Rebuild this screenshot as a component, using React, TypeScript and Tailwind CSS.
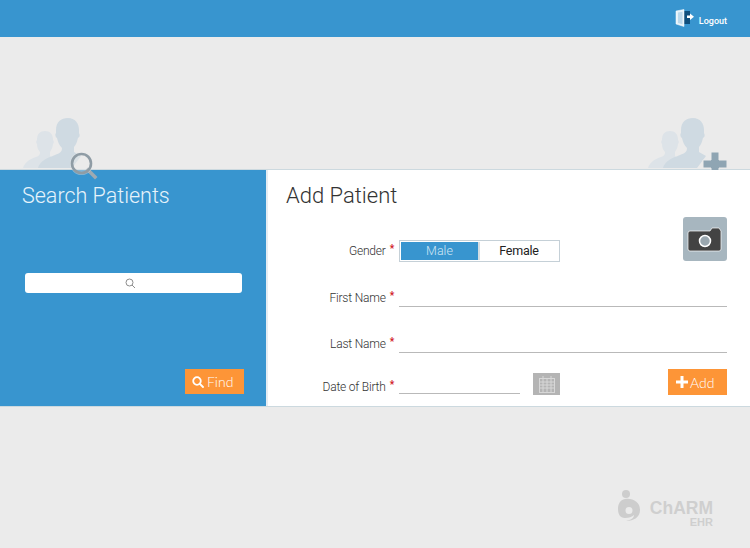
import React from "react";

function People({ className }: { className?: string }) {
  return (
    <svg className={className} width="76" height="52" viewBox="0 0 76 52">
      <path fill="#dde3e8" d="M0 51c2-6 7-9 13-11 3-1 4-2 4-5-2-2-3-5-3-8-1-1-1-3 0-4 0-6 3-9 8-9s8 3 8 9c1 1 1 3 0 4 0 3-2 6-3 8l0 4 3 3-6 9z" />
      <path fill="#cfdae2" d="M15 51c2-7 9-10 17-13 5-2 7-3 7-7-3-3-4-6-5-10-2-1-2-4-1-5 0-1 0-2 0-3 0-8 5-12 12-12s11 5 11 12c0 1 0 2 0 3 1 2 1 4-1 5-1 4-2 7-4 9v5l7 4-9 12z" />
    </svg>
  );
}

function Label({ children, className }: { children: React.ReactNode; className?: string }) {
  return (
    <div className={`w-[131px] shrink-0 pr-[5px] text-right font-[Roboto,sans-serif] text-[12px] leading-[16px] font-light tracking-[-0.2px] text-[#333] ${className ?? ""}`}>
      {children}
      <span className="relative -top-[3px] ml-[4px] text-[10px] font-bold text-[#d0141e]">*</span>
    </div>
  );
}

export default function App() {
  return (
    <div className="flex h-[548px] w-[750px] flex-col overflow-hidden bg-[#ebebeb] font-[Roboto,sans-serif]">
      <header className="flex h-[37px] shrink-0 items-center justify-end gap-[5px] bg-[#3895cf] pr-[23px]">
        <svg width="19" height="18" viewBox="0 0 19 18" className="-mt-[2px]">
          <rect x="8" y="2" width="7" height="13" fill="#0f4f7d" />
          <path fill="#e8f3fa" stroke="#fff" strokeWidth="0.5" d="M1 2 9 0.500v17L1 15z" />
          <path fill="#bcd9ec" d="M3 3.500 7.500 2.700v12.600L3 14z" />
          <path fill="#fff" d="M12 6.500h3V4.500l4 3.200-4 3.200V9h-3z" />
        </svg>
        <span className="pt-[7px] font-[Roboto,sans-serif] text-[9px] font-medium text-white">Logout</span>
      </header>

      <div className="relative flex h-[132px] shrink-0 items-end justify-between pr-[26px] pl-[23px]">
        <People />
        <People />
        <svg className="absolute top-[114px] left-[69px]" width="30" height="30" viewBox="0 0 30 30">
          <path d="M19 19 26 26" stroke="#9faab2" strokeWidth="3.500" strokeLinecap="square" />
          <circle cx="12.500" cy="12.500" r="11.500" fill="#ebebeb" fillOpacity="0.4" />
          <circle cx="12.500" cy="12.500" r="9.500" fill="none" stroke="#8f9ca5" strokeWidth="2.600" />
        </svg>
        <svg className="absolute top-[114px] left-[702px]" width="26" height="26" viewBox="0 0 26 26">
          <path d="M9 1h8v8h8v8h-8v8H9v-8H1V9h8z" fill="#8fa5b3" stroke="#ebebeb" strokeWidth="1" />
        </svg>
      </div>

      <main className="flex h-[238px] shrink-0 border-y border-[#ccd9df] bg-[#e6edf3]">
        <section className="flex w-[266px] shrink-0 flex-col bg-[#3895cf] pr-[25px] pl-[22px]">
          <h2 className="mt-[12px] font-[Roboto,sans-serif] text-[21.5px] leading-[28px] font-light text-[#e6f3fb]">Search Patients</h2>
          <div className="mt-[63px] -mr-[0.500px] ml-[2.500px] flex h-[20px] items-center justify-center rounded-[3px] bg-white pr-[6px]">
            <svg width="11" height="11" viewBox="0 0 11 11" fill="none" stroke="#8d8d8d" strokeWidth="1">
              <circle cx="4.500" cy="4.500" r="3.500" />
              <path d="M7 7l3 3" />
            </svg>
          </div>
          <button className="mt-[76px] ml-[163px] flex h-[25px] w-[59px] items-center justify-start gap-[3px] bg-[#fd9537] pl-[7px] font-[Lato,sans-serif] text-[14px] font-light text-white">
            <svg width="12" height="12" viewBox="0 0 12 12" fill="none" stroke="#fff" strokeWidth="1.800">
              <circle cx="5" cy="5" r="3.800" />
              <path d="M8 8l3 3" strokeLinecap="round" />
            </svg>
            Find
          </button>
        </section>

        <section className="relative ml-[2px] flex flex-1 flex-col bg-white pr-[23px] pl-[18px]">
          <h1 className="mt-[12px] font-[Roboto,sans-serif] text-[22px] leading-[28px] font-light text-[#333]">Add Patient</h1>
          <div className="absolute top-[47px] right-[23px] flex h-[44px] w-[44px] items-center justify-center rounded-[3px] bg-[#a7b6bf]">
            <svg width="36" height="25" viewBox="0 0 36 25" className="mt-[1px]">
              <path d="M3 4h20l2-3h7l2 3v18a2 2 0 0 1-2 2H3a2 2 0 0 1-2-2V6a2 2 0 0 1 2-2z" fill="#434343" stroke="#fff" strokeWidth="0.700" />
              <circle cx="18" cy="14" r="5.500" fill="#9aa7af" stroke="#fff" strokeWidth="1.500" />
            </svg>
          </div>

          <div className="mt-[30px] -ml-[18px] flex items-center">
            <Label>Gender</Label>
            <div className="flex h-[22px] w-[161px] border border-[#c5d0d7] bg-white p-px">
              <div className="flex w-[77px] items-center justify-center bg-[#3895cf] text-[12.5px] font-light text-[#cfe6f5]">Male</div>
              <div className="flex flex-1 items-center justify-center border-l-2 border-[#d5dde2] text-[12.5px] tracking-[-0.25px] text-[#222]">Female</div>
            </div>
          </div>

          <div className="mt-[25px] -ml-[18px] flex items-end">
            <Label>First Name</Label>
            <div className="h-[20px] flex-1 border-b border-[#b9b9b9]" />
          </div>
          <div className="mt-[26px] -ml-[18px] flex items-end">
            <Label>Last Name</Label>
            <div className="h-[20px] flex-1 border-b border-[#b9b9b9]" />
          </div>

          <div className="mt-[16px] -ml-[18px] flex items-end">
            <Label className="-mb-px">Date of Birth</Label>
            <div className="mb-px h-[20px] w-[121px] border-b border-[#b9b9b9]" />
            <div className="ml-[13px] flex h-[22px] w-[27px] items-center justify-center bg-[#b4b4b4]">
              <svg width="16" height="17" viewBox="0 0 16 17" fill="none" stroke="#d7d7d7" strokeWidth="1">
                <rect x="0.500" y="2.500" width="15" height="14" />
                <path d="M0 6h16M0 9h16M0 12h16M4 3v13M8 3v13M12 3v13M4 0v3M12 0v3" />
              </svg>
            </div>
            <button className="ml-auto flex h-[26px] w-[59px] items-center justify-start gap-[2px] bg-[#fd9537] pl-[8px] font-[Lato,sans-serif] text-[14px] font-light text-white">
              <svg width="12" height="12" viewBox="0 0 12 12"><path fill="#fff" d="M4.500 0h3v4.500H12v3H7.500V12h-3V7.500H0v-3h4.500z" /></svg>
              Add
            </button>
          </div>
        </section>
      </main>

      <footer className="flex flex-1 items-start justify-end pt-[83px] pr-[37px]">
        <div className="flex items-start gap-[9px]">
          <svg width="24" height="32" viewBox="0 0 24 32">
            <circle cx="9" cy="4" r="4" fill="#cdcdcd" />
            <path fill="#cdcdcd" fillRule="evenodd" d="M8 9c8-1 15 3 15 11 0 7-6 11-14 11 5-1 8-3 8-6-2 2-5 3-9 3-5 0-7-4-7-9C1 14 3 10 8 9zm4 8a3.500 3.500 0 1 0 0 7 3.500 3.500 0 0 0 0-7z" />
          </svg>
          <div className="mt-[11px] flex flex-col items-end">
            <span className="font-['Liberation_Sans',sans-serif] text-[17.5px] leading-[15px] font-bold text-[#cfcfcf]">ChARM</span>
            <span className="mt-[2px] font-['Liberation_Sans',sans-serif] text-[11px] leading-[9px] font-bold text-[#cfcfcf]">EHR</span>
          </div>
        </div>
      </footer>
    </div>
  );
}
